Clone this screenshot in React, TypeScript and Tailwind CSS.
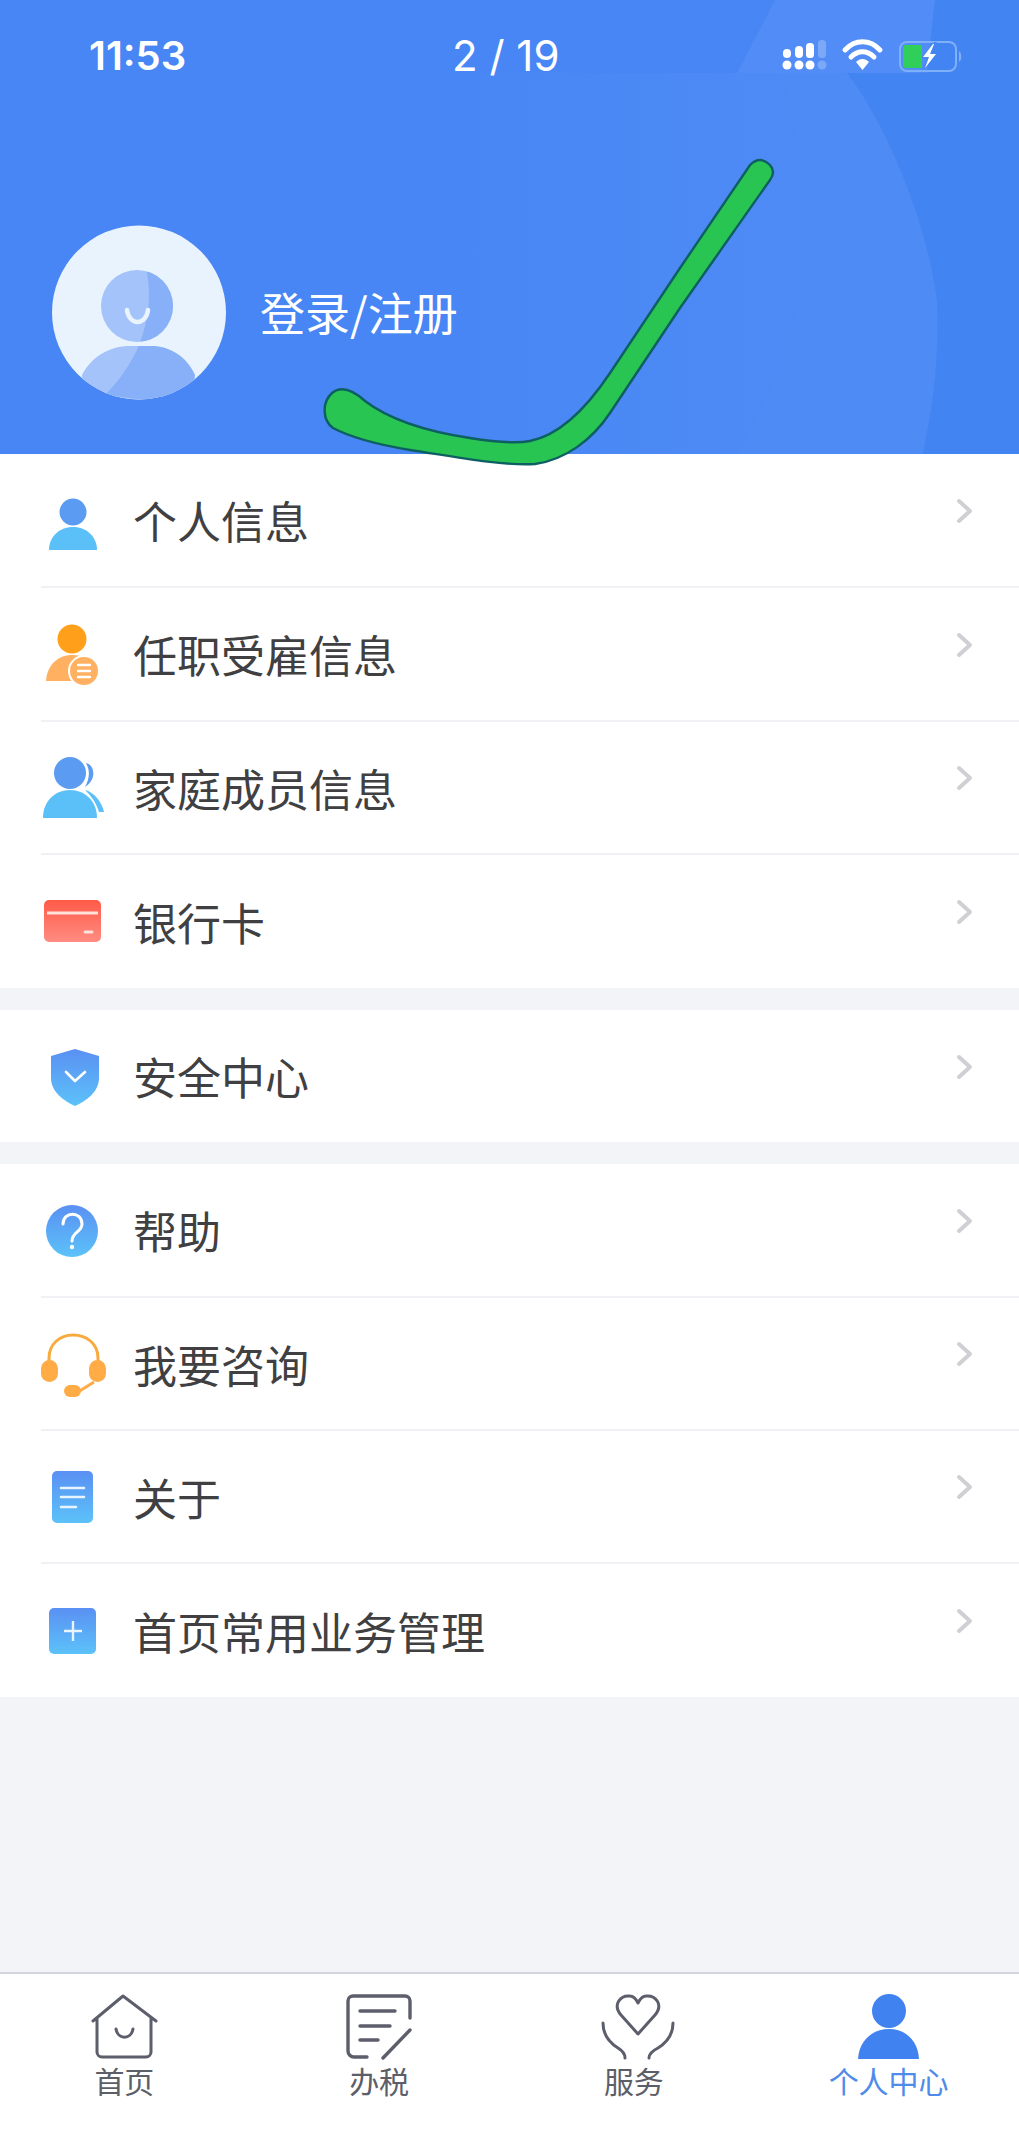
import type { ReactNode } from "react";

const CJK = "font-['Noto_Sans_CJK_SC','Noto_Sans',sans-serif]";

// slot starts at x=41, viewBox keeps page coordinates so shapes line up with the shot
function Slot({ top, h, children }: { top: number; h: number; children: ReactNode }) {
  return (
    <svg width="92" height={h} viewBox={`41 ${top} 92 ${h}`} className="shrink-0">
      {children}
    </svg>
  );
}

function Grads() {
  return (
    <svg width="0" height="0" className="absolute">
      <defs>
        <linearGradient id="blue" x1="0" y1="0" x2="0" y2="1">
          <stop offset="0" stopColor="#5a90f3" />
          <stop offset="1" stopColor="#5cc2f9" />
        </linearGradient>
        <linearGradient id="red" x1="0" y1="0" x2="0" y2="1">
          <stop offset="0" stopColor="#ff5b48" />
          <stop offset="1" stopColor="#ff8c82" />
        </linearGradient>
        <linearGradient id="fade" gradientUnits="userSpaceOnUse" x1="450" y1="0" x2="800" y2="0">
          <stop offset="0" stopColor="#528df6" stopOpacity="0" />
          <stop offset="1" stopColor="#528df6" />
        </linearGradient>
      </defs>
    </svg>
  );
}

function PersonIcon() {
  return (
    <>
      <circle cx="73" cy="512" r="13.5" fill="#5b9bf2" />
      <path d="M49 550 C49 537 59 527 73 527 C87 527 97 537 97 550 Z" fill="#5cc0f8" />
    </>
  );
}

function JobIcon() {
  return (
    <>
      <circle cx="72" cy="639" r="14.5" fill="#ff9f1a" />
      <path d="M46 681 C47 665 58 655 72 655 C84 655 92 660 96 668 L78 681 Z" fill="#ffb060" />
      <circle cx="84" cy="671" r="16" fill="#fff" />
      <circle cx="84" cy="671" r="14" fill="#ffb060" />
      <path d="M78 665 H90 M78 671 H90 M78 677 H90" stroke="#fff" strokeWidth="2.4" strokeLinecap="round" />
    </>
  );
}

function FamilyIcon() {
  return (
    <>
      <path d="M86 763 C95 765 97 780 85 787 C90 778 90 770 86 763 Z" fill="#5b9bf2" />
      <path d="M85 790 C94 792 102 802 104 812 L99 812 C96 802 91 796 85 790 Z" fill="#5cc0f8" />
      <circle cx="70" cy="773" r="16" fill="#5b9bf2" />
      <path d="M43 818 C43 801 55 790 70 790 C85 790 97 801 97 818 Z" fill="#5cc0f8" />
    </>
  );
}

function CardIcon() {
  return (
    <>
      <rect x="44" y="900" width="57" height="42" rx="5" fill="url(#red)" />
      <path d="M47 913 H98" stroke="#ffe2dc" strokeWidth="3" />
      <path d="M85 932 H92" stroke="#ffe2dc" strokeWidth="3" strokeLinecap="round" />
    </>
  );
}

function ShieldIcon() {
  return (
    <>
      <path d="M75 1049 L99 1056 V1078 C99 1092 86 1101 75 1106 C64 1101 51 1092 51 1078 V1056 Z" fill="url(#blue)" />
      <path d="M66 1072 L75 1081 L85 1072" fill="none" stroke="#fff" strokeWidth="2.6" strokeLinecap="round" strokeLinejoin="round" />
    </>
  );
}

function HelpIcon() {
  return (
    <>
      <circle cx="72" cy="1231" r="26" fill="url(#blue)" />
      <path d="M63 1224 C63 1211 82 1211 82 1224 C82 1232 72 1232 72 1241" fill="none" stroke="#fff" strokeWidth="3" strokeLinecap="round" />
      <circle cx="72" cy="1247" r="2.2" fill="#fff" />
    </>
  );
}

function HeadsetIcon() {
  return (
    <>
      <path d="M49 1362 V1358 C49 1344 60 1335 73 1335 C87 1335 98 1344 98 1358 V1362" fill="none" stroke="#f8ab3c" strokeWidth="3" />
      <rect x="41" y="1360" width="17" height="22" rx="8.5" fill="#ffac46" />
      <rect x="89" y="1360" width="17" height="22" rx="8.5" fill="#ffac46" />
      <path d="M94 1382 L78 1392" stroke="#ffac46" strokeWidth="3" />
      <rect x="64" y="1385" width="17" height="12" rx="6" fill="#ffac46" />
    </>
  );
}

function DocIcon() {
  return (
    <>
      <rect x="52" y="1471" width="41" height="52" rx="5" fill="url(#blue)" />
      <path d="M61 1488 H84 M61 1497 H84 M61 1507 H76" stroke="#e8f4ff" strokeWidth="2.6" strokeLinecap="round" />
    </>
  );
}

function PlusIcon() {
  return (
    <>
      <rect x="49" y="1608" width="47" height="46" rx="5" fill="url(#blue)" />
      <path d="M64 1631 H82 M73 1621 V1641" stroke="#e8f4ff" strokeWidth="2.4" />
    </>
  );
}

function Row({ label, top, h, icon, last }: { label: string; top: number; h: number; icon: ReactNode; last?: boolean }) {
  return (
    <div className="bg-white pl-[41px]">
      <div className={last ? "flex items-center" : "flex items-center border-b-2 border-[#f0f1f4]"} style={{ height: h }}>
        <Slot top={top} h={last ? h : h - 2}>{icon}</Slot>
        <span className={`flex-1 text-[44px] leading-none text-[#404042] ${CJK}`}>{label}</span>
        <svg width="20" height="26" viewBox="0 0 20 26" className="mr-[44px] mb-[19px]">
          <path d="M4 3 L15 13 L4 23" fill="none" stroke="#d0d0d4" strokeWidth="4" strokeLinejoin="round" strokeLinecap="round" />
        </svg>
      </div>
    </div>
  );
}

function StatusIcons() {
  return (
    <svg width="190" height="42" viewBox="780 35 190 42" className="shrink-0">
      <g fill="#fff">
        <circle cx="787" cy="65" r="4.5" />
        <circle cx="799" cy="65" r="4.5" />
        <circle cx="810" cy="65" r="4.5" />
        <rect x="783" y="49" width="8" height="9" rx="4" />
        <rect x="795" y="46" width="8" height="12" rx="4" />
        <rect x="806" y="43" width="8" height="15" rx="3.5" />
      </g>
      <g fill="#7ba9f8">
        <circle cx="822" cy="65" r="4.5" />
        <rect x="818" y="40" width="8" height="18" rx="3.5" />
      </g>
      <path d="M845 50 C855 39 870 39 880 50 M851 57 C858 50 867 50 874 57" fill="none" stroke="#fff" strokeWidth="5" strokeLinecap="round" />
      <path d="M856 62 C860 58 865 58 869 62 L862.5 70 Z" fill="#fff" />
      <rect x="900" y="42" width="56" height="29" rx="7" fill="none" stroke="#7fb0fa" strokeWidth="2" />
      <path d="M959 51 C962 53 962 60 959 62 Z" fill="#7fb0fa" />
      <path d="M906 45 H922 V68 H906 A3 3 0 0 1 903 65 V48 A3 3 0 0 1 906 45 Z" fill="#2fcf5a" />
      <path d="M934 42 L921 58 H927 L922 71 L938 53 H931 L937 42 Z" fill="#4a87f4" />
      <path d="M933 44 L923 57 H929 L925 68 L936 54 H930 L934 44 Z" fill="#fff" />
    </svg>
  );
}

function Avatar() {
  return (
    <svg width="175" height="175" viewBox="52 225 175 175" className="shrink-0">
      <defs>
        <clipPath id="disc"><circle cx="139" cy="312.5" r="87" /></clipPath>
        <clipPath id="figure">
          <circle cx="137" cy="306" r="36" />
          <path d="M82 375 C92 356 110 346 130 346 H150 C170 346 186 356 195 375 L190 410 H85 Z" />
        </clipPath>
      </defs>
      <circle cx="139" cy="312.5" r="87" fill="#e9f3fe" />
      <g clipPath="url(#disc)">
        <g clipPath="url(#figure)">
          <rect x="52" y="225" width="175" height="175" fill="#a3c3fa" />
          <path d="M145 265 C152 290 150 320 137 350 C128 368 118 382 105 395 L230 410 V260 Z" fill="#88b0f8" />
        </g>
      </g>
      <path d="M127 310 C129 326 146 326 148 310" fill="none" stroke="#eaf4ff" strokeWidth="4.5" strokeLinecap="round" />
    </svg>
  );
}

function Tab({ label, active, children }: { label: string; active?: boolean; children: ReactNode }) {
  return (
    <div className="flex flex-col items-center pr-[6px]">
      {children}
      <span className={`text-[30px] leading-[40px] ${CJK} ${active ? "text-[#4f8be8]" : "text-[#5c5e68]"}`}>{label}</span>
    </div>
  );
}

export default function App() {
  return (
    <div className="relative w-[1019px] h-[2142px] overflow-hidden flex flex-col bg-[#f2f4f8]">
      <Grads />
      {/* header */}
      <div className="relative h-[454px] shrink-0 bg-[#4786f4]">
        <svg width="1019" height="454" viewBox="0 0 1019 454" className="absolute inset-0">
          <path d="M450 73 H780 C795 130 803 180 803 233 C803 320 770 400 737 454 H450 Z" fill="url(#fade)" opacity="0.7" />
          <path d="M847 73 C880 115 925 210 937 300 C940 360 932 410 923 454 H737 C770 400 803 320 803 233 C803 170 790 110 780 73 Z" fill="#4e8bf5" />
          <path d="M775 0 H935 L927 73 H737 Z" fill="#528cf6" />
          <path d="M935 0 H1019 V454 H923 C932 410 940 360 937 300 C925 210 880 115 847 73 H927 Z" fill="#4384f3" />
        </svg>
        <div className="relative flex items-center h-[112px] pl-[89px] pr-[49px]">
          <span className="w-[363px] font-['Inter',sans-serif] text-[40px] font-semibold leading-none text-white">11:53</span>
          <span className="flex-1 font-['Inter',sans-serif] text-[42px] leading-none text-white">2 / 19</span>
          <StatusIcons />
        </div>
        <div className="relative flex items-center gap-[33px] pl-[52px] mt-[113px]">
          <Avatar />
          <span className={`mb-[3px] text-[45px] leading-none text-white ${CJK}`}>登录/注册</span>
        </div>
      </div>

      {/* menu */}
      <Row label="个人信息" top={454} h={134} icon={<PersonIcon />} />
      <Row label="任职受雇信息" top={588} h={134} icon={<JobIcon />} />
      <Row label="家庭成员信息" top={722} h={133} icon={<FamilyIcon />} />
      <Row label="银行卡" top={855} h={133} icon={<CardIcon />} last />

      <div className="mt-[22px]">
        <Row label="安全中心" top={1010} h={132} icon={<ShieldIcon />} last />
      </div>

      <div className="mt-[22px]">
        <Row label="帮助" top={1164} h={134} icon={<HelpIcon />} />
        <Row label="我要咨询" top={1298} h={133} icon={<HeadsetIcon />} />
        <Row label="关于" top={1431} h={133} icon={<DocIcon />} />
        <Row label="首页常用业务管理" top={1564} h={133} icon={<PlusIcon />} last />
      </div>

      {/* tab bar */}
      <div className="mt-auto h-[170px] shrink-0 bg-white border-t-2 border-[#d5d5dd] grid grid-cols-4 pt-[20px]">
        <Tab label="首页">
          <svg width="70" height="66" viewBox="89 1993 70 66">
            <path d="M93 2020 L123 1995 L156 2020 M97 2017 V2051 A5 5 0 0 0 102 2056 H146 A5 5 0 0 0 151 2051 V2017" fill="none" stroke="#5c5e6c" strokeWidth="3" strokeLinecap="round" strokeLinejoin="round" />
            <path d="M116 2028 C118 2039 131 2039 133 2028" fill="none" stroke="#5c5e6c" strokeWidth="3" strokeLinecap="round" />
          </svg>
        </Tab>
        <Tab label="办税">
          <svg width="70" height="66" viewBox="344 1993 70 66">
            <path d="M410 2017 V2000 A5 5 0 0 0 405 1995 H353 A5 5 0 0 0 348 2000 V2050 A6 6 0 0 0 354 2056 H367" fill="none" stroke="#5c5e6c" strokeWidth="3.4" strokeLinecap="round" />
            <path d="M360 2010 H395 M360 2025 H390 M360 2039 H378 M383 2057 L410 2029" fill="none" stroke="#5c5e6c" strokeWidth="3.4" strokeLinecap="round" />
          </svg>
        </Tab>
        <Tab label="服务">
          <svg width="90" height="66" viewBox="589 1993 90 66">
            <path d="M638 2033 L621 2014 C612 2003 621 1994 630 1995 C634 1995 636 1998 638 2002 C640 1998 642 1995 646 1995 C655 1994 664 2003 655 2014 Z" fill="none" stroke="#5c5e6c" strokeWidth="3" strokeLinejoin="round" />
            <path d="M603 2022 C603 2035 610 2042 618 2047 C623 2050 625 2053 625 2057 M673 2022 C673 2035 666 2042 658 2047 C652 2050 649 2053 649 2057" fill="none" stroke="#5c5e6c" strokeWidth="3" strokeLinecap="round" />
          </svg>
        </Tab>
        <Tab label="个人中心" active>
          <svg width="70" height="66" viewBox="854 1993 70 66">
            <circle cx="889" cy="2010" r="17" fill="#3f82f0" />
            <path d="M858 2058 C859 2040 872 2028 889 2028 C906 2028 918 2040 919 2058 Z" fill="#3f82f0" />
          </svg>
        </Tab>
      </div>

      {/* hand-drawn check on top of the shot */}
      <svg width="1019" height="500" viewBox="0 0 1019 500" className="absolute left-0 top-0 pointer-events-none">
        <path
          d="M750 165 Q760 155 770 165 Q776 172 770 180 L680 308 L610 413 C592 440 565 460 535 464 C500 466 450 456 410 450 C380 445 350 437 333 428 C322 420 322 402 332 393 C342 385 355 392 365 401 C390 420 430 432 470 438 C495 442 515 444 530 441 C555 436 582 415 610 373 L680 268 Z"
          fill="#28c552"
          stroke="#0e5f62"
          strokeWidth="2.4"
        />
      </svg>
    </div>
  );
}
